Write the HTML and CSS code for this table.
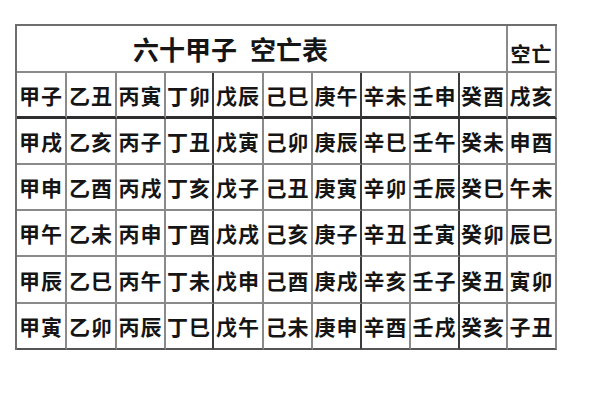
FILE: index.html
```html
<!DOCTYPE html>
<html lang="zh-CN">
<head>
<meta charset="utf-8">
<title>六十甲子 空亡表</title>
<link rel="stylesheet" href="styles.css">
</head>
<body>
<div class="sheet">
  <div class="table">
    <div class="cell title">六十甲子<span class="gap"> </span>空亡表</div>
    <div class="cell head">空亡</div>

    <div class="cell">甲子</div><div class="cell">乙丑</div><div class="cell">丙寅</div><div class="cell sep">丁卯</div><div class="cell">戊辰</div><div class="cell">己巳</div><div class="cell sep">庚午</div><div class="cell">辛未</div><div class="cell sep">壬申</div><div class="cell">癸酉</div><div class="cell">戌亥</div>

    <div class="cell">甲戌</div><div class="cell">乙亥</div><div class="cell">丙子</div><div class="cell sep">丁丑</div><div class="cell">戊寅</div><div class="cell">己卯</div><div class="cell sep">庚辰</div><div class="cell">辛巳</div><div class="cell sep">壬午</div><div class="cell">癸未</div><div class="cell">申酉</div>

    <div class="cell">甲申</div><div class="cell">乙酉</div><div class="cell">丙戌</div><div class="cell sep">丁亥</div><div class="cell">戊子</div><div class="cell">己丑</div><div class="cell sep">庚寅</div><div class="cell">辛卯</div><div class="cell sep">壬辰</div><div class="cell">癸巳</div><div class="cell">午未</div>

    <div class="cell">甲午</div><div class="cell">乙未</div><div class="cell">丙申</div><div class="cell sep">丁酉</div><div class="cell">戊戌</div><div class="cell">己亥</div><div class="cell sep">庚子</div><div class="cell">辛丑</div><div class="cell sep">壬寅</div><div class="cell">癸卯</div><div class="cell">辰巳</div>

    <div class="cell">甲辰</div><div class="cell">乙巳</div><div class="cell">丙午</div><div class="cell sep">丁未</div><div class="cell">戊申</div><div class="cell">己酉</div><div class="cell sep">庚戌</div><div class="cell">辛亥</div><div class="cell sep">壬子</div><div class="cell">癸丑</div><div class="cell">寅卯</div>

    <div class="cell last">甲寅</div><div class="cell last">乙卯</div><div class="cell last">丙辰</div><div class="cell last sep">丁巳</div><div class="cell last">戊午</div><div class="cell last">己未</div><div class="cell last sep">庚申</div><div class="cell last">辛酉</div><div class="cell last sep">壬戌</div><div class="cell last">癸亥</div><div class="cell last">子丑</div>
  </div>
</div>
</body>
</html>
```
FILE: styles.css
```css
html, body {
  margin: 0;
  padding: 0;
  background: #ffffff;
}

body {
  width: 600px;
  height: 400px;
  overflow: hidden;
  font-family: "Noto Sans CJK SC", "Noto Sans CJK TC", sans-serif;
  color: #151515;
}

.sheet {
  padding: 24px 0 0 15px;
}

.table {
  display: grid;
  grid-template-columns: 50px 50px 49px 48px 50px 49px 49px 49px 49px 48px 49px;
  grid-template-rows: 47px 46px 46px 46px 46px 47px 46px;
  width: max-content;
  border-left: 2px solid #6e6e6e;
  border-top: 2px solid #6e6e6e;
}

.cell {
  box-sizing: border-box;
  display: flex;
  align-items: center;
  justify-content: center;
  border-right: 2px solid #8a8a8a;
  border-bottom: 2px solid #8a8a8a;
  font-size: 21px;
  font-weight: 700;
  letter-spacing: 1px;
  line-height: 1;
  white-space: nowrap;
  padding-top: 1px;
}

.cell.sep {
  border-right-color: #3c3c3c;
}

.cell.last {
  border-bottom-color: #555555;
}

.title {
  grid-column: 1 / span 10;
  justify-content: flex-start;
  padding-left: 116px;
  font-size: 26px;
  letter-spacing: 0;
  border-bottom: 2px solid #8a8a8a;
}

.title .gap {
  display: inline-block;
  width: 13px;
}

.head {
  align-items: flex-end;
  padding-bottom: 7px;
  font-size: 20px;
  border-bottom: 2px solid #8a8a8a;
}

.table > .cell:nth-child(n+3):nth-child(-n+13) {
  border-bottom: 3px solid #2e2e2e;
}
```
